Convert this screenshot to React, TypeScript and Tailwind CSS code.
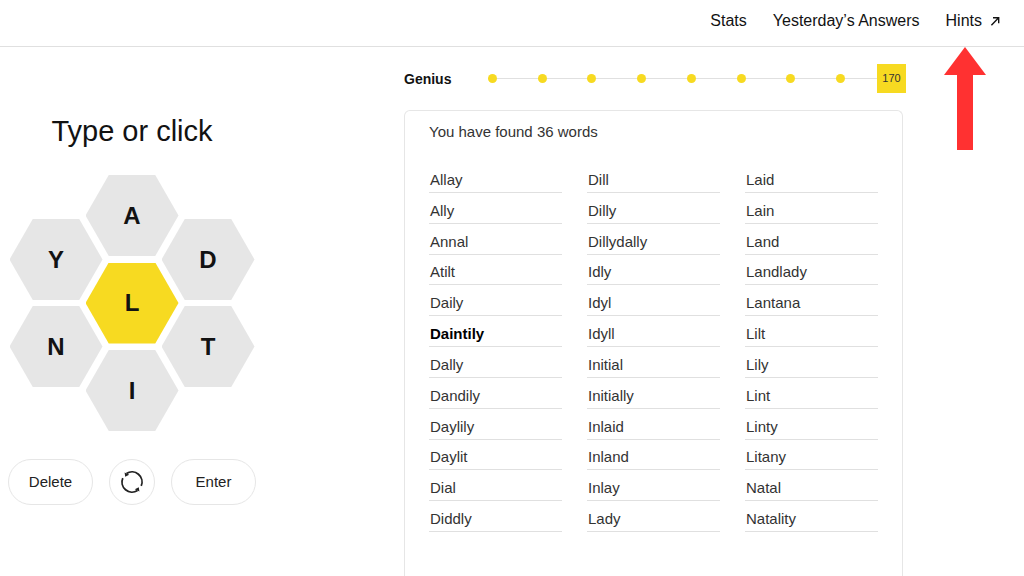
import { Fragment } from "react";

//Interface
interface HexProps {
    letter: string;
    center?: boolean;
}

//Data
const words = [
    "Allay", "Ally", "Annal", "Atilt", "Daily", "Daintily", "Dally", "Dandily", "Daylily", "Daylit", "Dial", "Diddly",
    "Dill", "Dilly", "Dillydally", "Idly", "Idyl", "Idyll", "Initial", "Initially", "Inlaid", "Inland", "Inlay", "Lady",
    "Laid", "Lain", "Land", "Landlady", "Lantana", "Lilt", "Lily", "Lint", "Linty", "Litany", "Natal", "Natality",
];
const pangrams = ["Daintily"];
const ranks = ["Beginner", "Good Start", "Moving Up", "Good", "Solid", "Nice", "Great", "Amazing"];

const Hex = ({ letter, center = false }: HexProps) => (
    <button
        className={`w-[93px] h-[81px] text-2xl font-bold [clip-path:polygon(25%_0,75%_0,100%_50%,75%_100%,25%_100%,0_50%)] ${center ? "bg-[#f7da21]" : "bg-[#e6e6e6]"}`}
    >
        {letter}
    </button>
);

const Header = () => (
    <header className="flex justify-end h-[47px] pr-6 pb-1 border-b border-[#e0e0e0]">
        <nav className="flex items-center gap-[26px] text-base">
            <a href="#stats">Stats</a>
            <a href="#yesterday">Yesterday’s Answers</a>
            <a href="#hints" className="relative flex items-center gap-2">
                Hints
                <svg className="w-[10px] h-[10px]" viewBox="0 0 10 10" fill="none" stroke="currentColor" strokeWidth="1.4">
                    <path d="M1.4 9.2 L8.4 2 M3 1.7 H8.7 V7.2" />
                </svg>
                <svg className="absolute top-full left-0 mt-3.5 -ml-0.5 w-[42px] h-[103px]" viewBox="0 0 42 103" fill="#ff3131">
                    <path d="M21 0 L42 28 H29 V103 H13 V28 H0 Z" />
                </svg>
            </a>
        </nav>
    </header>
);

const Hive = () => (
    <section className="w-[248px] shrink-0 flex flex-col items-center pt-[66px]">
        <p className="text-[29px] leading-9">Type or click</p>
        <div className="flex items-center justify-center mt-[26px]">
            <div className="flex flex-col gap-1.5">
                <Hex letter="Y" />
                <Hex letter="N" />
            </div>
            <div className="flex flex-col justify-between h-64 -mx-[17px]">
                <Hex letter="A" />
                <Hex letter="L" center />
                <Hex letter="I" />
            </div>
            <div className="flex flex-col gap-1.5">
                <Hex letter="D" />
                <Hex letter="T" />
            </div>
        </div>
        <div className="flex gap-4 mt-7 text-[15px] text-[#222]">
            <button className="w-[85px] h-[46px] border border-[#e6e6e6] rounded-full">Delete</button>
            <button aria-label="Shuffle" className="flex items-center justify-center w-[46px] h-[46px] border border-[#e6e6e6] rounded-full">
                <svg className="w-6 h-6" viewBox="0 0 24 24" fill="none" stroke="currentColor" strokeWidth="1.8">
                    <path d="M6.5 3.6 A10 10 0 0 1 21.2 15.9" />
                    <path d="M17.5 20.4 A10 10 0 0 1 2.8 8.1" />
                    <path d="M4.6 2.4 L5.2 6.8 L9.2 4.8 Z M19.4 21.6 L18.8 17.2 L14.8 19.2 Z" fill="currentColor" stroke="none" />
                </svg>
            </button>
            <button className="w-[85px] h-[46px] border border-[#e6e6e6] rounded-full">Enter</button>
        </div>
    </section>
);

const Progress = () => (
    <div className="flex items-center h-[29px]">
        <h4 className="w-[84px] text-sm font-bold">Genius</h4>
        {ranks.map((rank, index) => (
            <Fragment key={rank}>
                <span title={rank} className="w-[9px] h-[9px] rounded-full bg-[#f7da21]" />
                <span className={index === ranks.length - 1 ? "w-8 h-px bg-[#e0e0e0]" : "flex-1 h-px bg-[#e0e0e0]"} />
            </Fragment>
        ))}
        <span className="flex items-center justify-center w-[29px] h-[29px] bg-[#f7da21] text-[11px] text-[#333]">170</span>
    </div>
);

const WordList = () => (
    <div className="flex-1 mt-[17px] mr-[3px] px-6 pb-11 border border-b-0 border-[#e6e6e6] rounded-t-md text-[15px] leading-5 text-[#333]">
        <h3 className="mt-[11px]">You have found {words.length} words</h3>
        <ul className="grid grid-flow-col grid-cols-3 grid-rows-12 gap-x-[25px] h-[370px] mt-5">
            {words.map((word) => (
                <li
                    key={word}
                    className={`flex items-end pl-px pb-0.5 border-b border-[#e0e0e0] ${pangrams.includes(word) ? "font-bold text-black" : ""}`}
                >
                    {word}
                </li>
            ))}
        </ul>
    </div>
);

const App = () => {
    return (
        <div className="flex flex-col min-h-screen bg-white text-[#121212] font-['Liberation_Sans',Arial,sans-serif]">
            <Header />
            <main className="flex flex-1 gap-[148px] pl-2 pr-[118px]">
                <Hive />
                <section className="flex-1 flex flex-col pt-[17px]">
                    <Progress />
                    <WordList />
                </section>
            </main>
        </div>
    );
};

export default App;
